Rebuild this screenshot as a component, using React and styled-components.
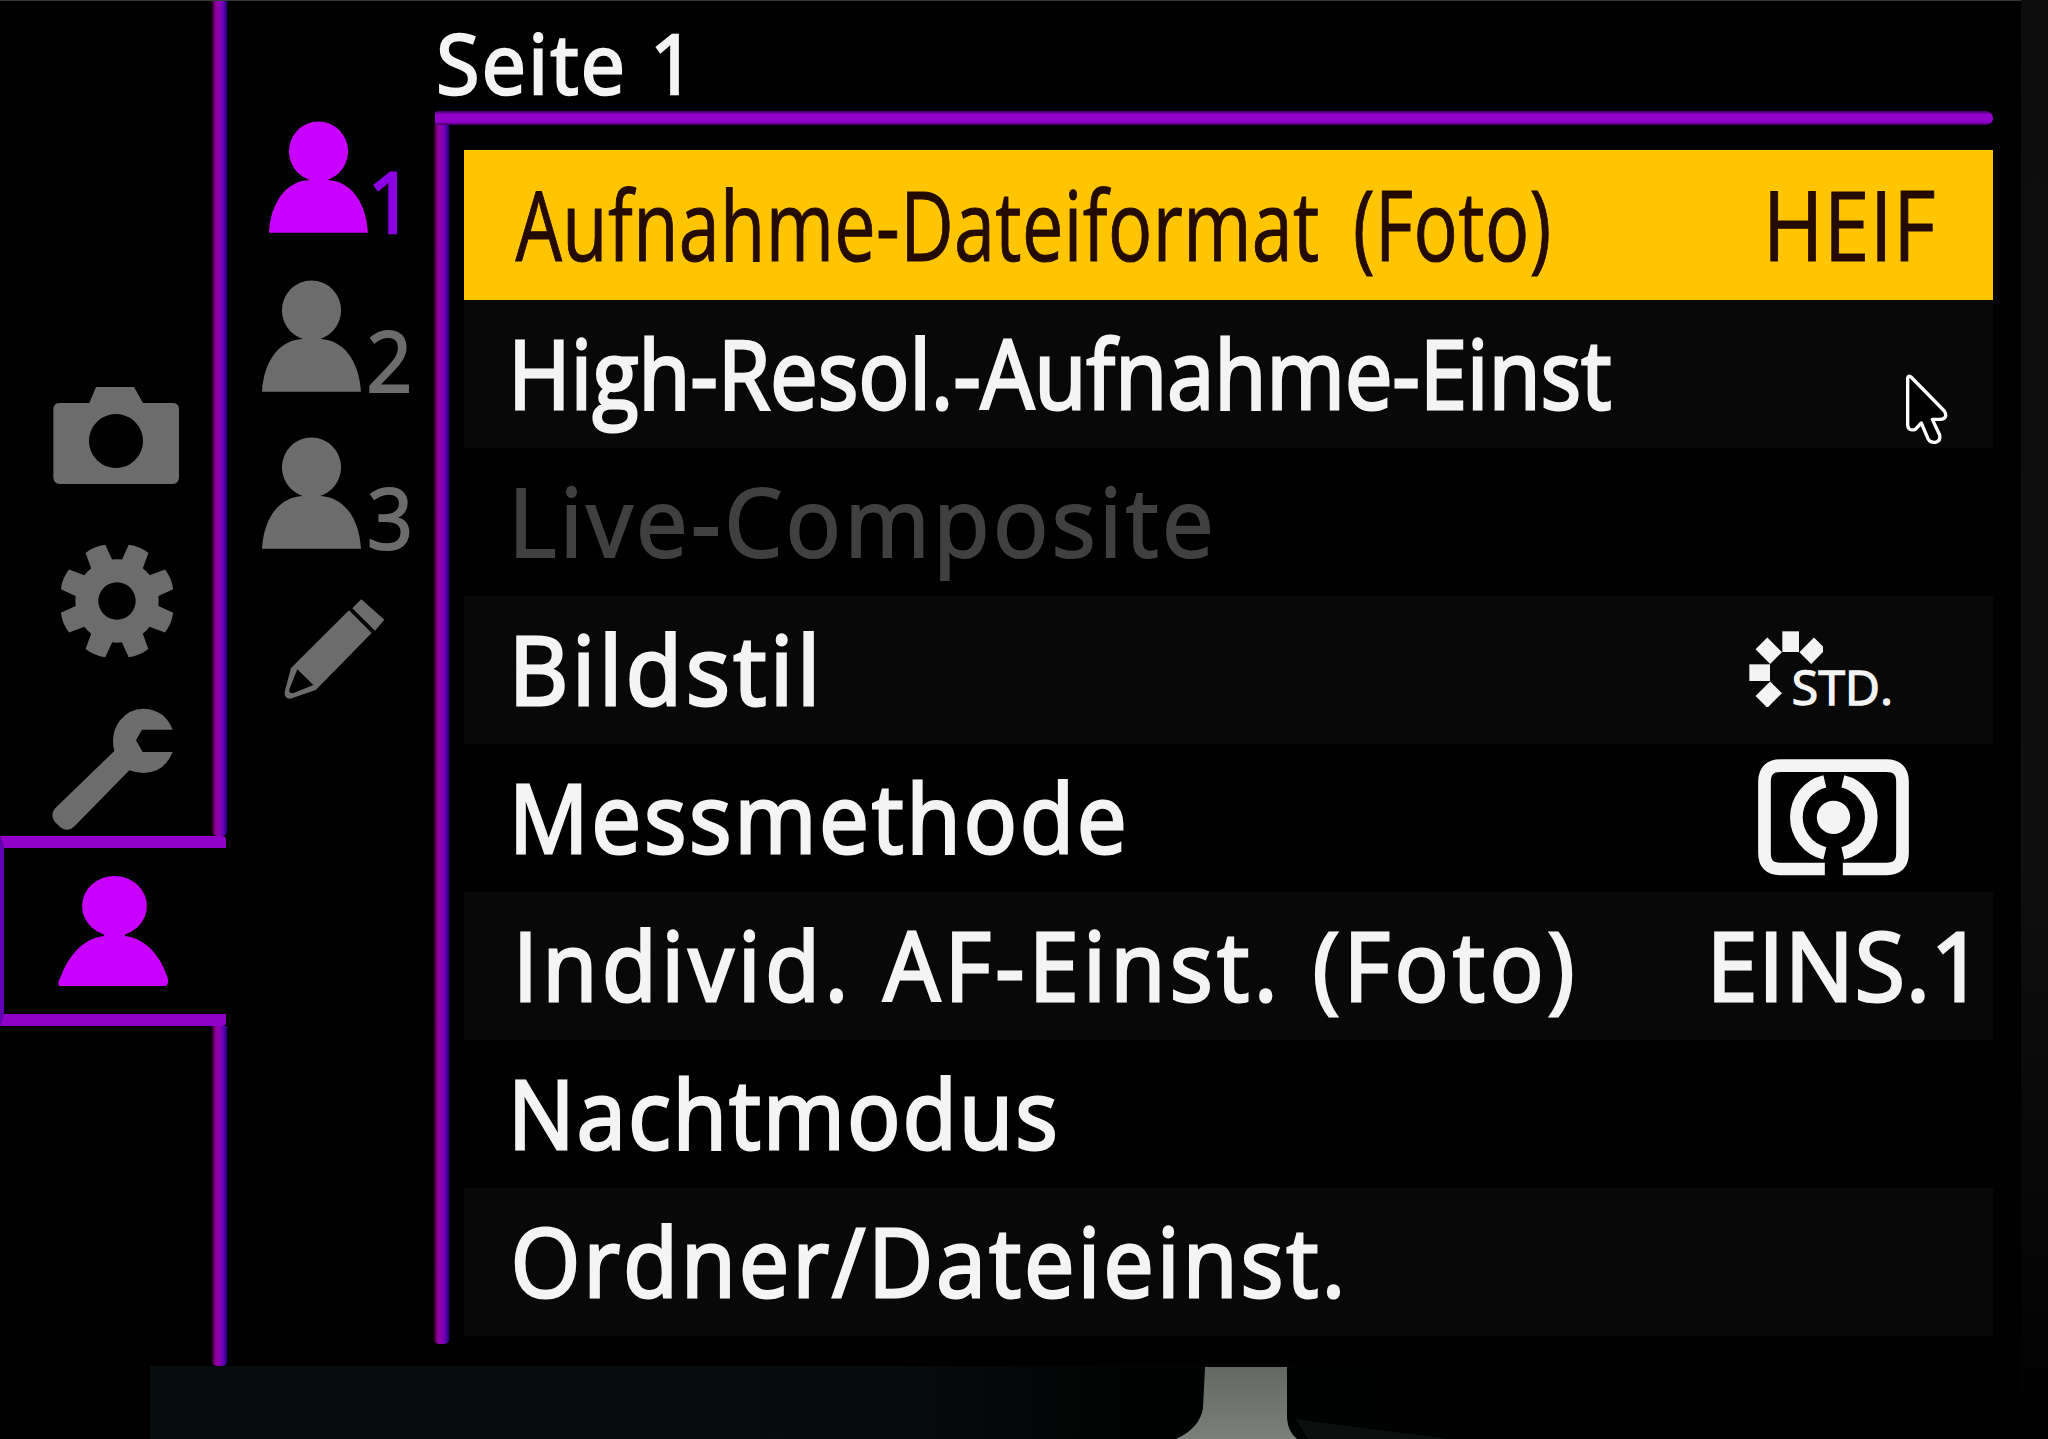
import React, { useLayoutEffect, useState } from 'react';
import styled, { createGlobalStyle } from 'styled-components'

const FONT = '"Open Sans", "Noto Sans", sans-serif'

const GlobalStyle = createGlobalStyle`
  * {
    box-sizing: border-box;
  }
  body {
    margin: 0;
    background: #000;
    font-family: ${FONT};
  }
  svg {
    display: block;
    flex: none;
  }
`

const Screen = styled.div`
  width: 2048px;
  height: 1439px;
  position: relative;
  overflow: hidden;
  background: #000;
  display: flex;
`

const Display = styled.div`
  width: 2021px;
  display: flex;
  flex-direction: column;
`

const Body = styled.div`
  height: 1366px;
  display: flex;
  border-top: 1px solid #343836;
`

const Bezel = styled.div`
  width: 27px;
  background: linear-gradient(#0d0d0d, #0f0f0f 60%, #050505 88%, #000);
`

const Line = styled.div`
  flex: none;
  width: 17px;
  height: ${props => props.$height ? props.$height + 'px' : 'auto'};
  background: linear-gradient(90deg, #000, #4a0040 12%, #8f009c 28%, #8a00b0 52%, #6400b8 72%, #2c0080 90%, #000);
  border-radius: 0 0 6px 6px;
`

const TopLine = styled.div`
  width: 1558px;
  height: 14px;
  margin-left: 2px;
  background: linear-gradient(#3a0058, #9200cc 25%, #9200cc 78%, #3a0058);
  border-radius: 3px 7px 7px 0;
`

const MainTabs = styled.div`
  width: 228px;
  display: flex;
  flex-direction: column;
`

const TabSection = styled.div`
  height: ${props => props.$height}px;
  display: flex;
  justify-content: space-between;
`

const TabIcons = styled.div`
  padding: 385px 0 0 50px;
`

const TabIcon = styled.svg`
  width: 132px;
  height: ${props => props.$height}px;
  margin-bottom: ${props => props.$gap || 0}px;
  fill: #6c6c6c;
`

const ActiveTab = styled.div`
  width: 226px;
  height: 190px;
  padding: 28px 0 0 53px;
  border: solid #9000c8;
  border-width: 12px 0 12px 4px;
  border-left-color: #6400b4;
  border-radius: 0 4px 4px 0;
`

const Pages = styled.div`
  width: 205px;
  padding-top: 120px;
  display: flex;
  flex-direction: column;
`

const Page = styled.div`
  height: 112px;
  margin: 0 0 ${props => props.$gap}px ${props => props.$active ? 41 : 34}px;
  display: flex;
  align-items: baseline;
  gap: ${props => props.$active ? 5 : 8}px;
  font-size: 84px;
  line-height: 84px;
  color: ${props => props.$active ? '#8c00e4' : '#6c6c6c'};

  svg {
    fill: ${props => props.$active ? '#c800ff' : '#6c6c6c'};
  }
`

const PencilBox = styled.div`
  padding-left: 55px;
`

const Menu = styled.div`
  flex: 1;
`

const Title = styled.div`
  height: 110px;
  padding: 6px 0 0 6px;
  line-height: 111px;
  color: #f4f4f4;
`

const Frame = styled.div`
  display: flex;
`

const Rows = styled.div`
  width: 1529px;
  margin: 25px 0 0 14px;
`

const rowColor = { normal: '#f4f4f4', selected: '#250a00', disabled: '#404040' }

const Row = styled.div`
  height: ${props => props.$kind === 'selected' ? 150 : 148}px;
  padding: 0 ${props => props.$end}px 5px ${props => props.$start}px;
  display: flex;
  align-items: center;
  justify-content: space-between;
  line-height: 138px;
  color: ${props => rowColor[props.$kind]};
  background: ${props => props.$kind === 'selected' ? '#ffc600' : props.$shaded ? '#080808' : '#000'};

  svg {
    position: relative;
    top: ${props => props.$drop || 0}px;
  }
`

const Label = styled.span`
  display: block;
  flex: none;
  width: ${props => props.$width}px;
  white-space: pre;
  transform-origin: 0 50%;
  font-size: ${props => props.$size}px;
  -webkit-text-stroke: ${props => props.$stroke}px currentColor;
`

const Backdrop = styled.div`
  height: 73px;
  margin-left: 150px;
  background: linear-gradient(90deg, #070c0c, #060b0b 40%, #010303 52%, #010202 60%, #000);
`

const Pointer = styled.svg`
  position: absolute;
  left: 1905px;
  top: 373px;
  width: 44px;
  height: 73px;
`

const Quality = styled.div`
  display: flex;
  align-items: flex-end;
  line-height: 49px;

  span {
    margin-left: -30px;
    position: relative;
    top: 5px;
  }
`

// Letter-spaces a label so its ink, outline included, fills exactly `width`
const Fit = ({ text, width, size = 95, squeeze = 0.92, stroke = 3, words = 0 }) => {
  const [fit, setFit] = useState({ spacing: 0, shift: 0 })

  useLayoutEffect(() => {
    const ctx = document.createElement('canvas').getContext('2d')
    ctx.font = `${size}px ${FONT}`
    const m = ctx.measureText(text)
    const ink = m.actualBoundingBoxLeft + m.actualBoundingBoxRight + stroke + words * (text.split(' ').length - 1)
    setFit({
      spacing: text.length > 1 ? (width / squeeze - ink) / (text.length - 1) : 0,
      shift: (m.actualBoundingBoxLeft + stroke / 2) * squeeze
    })
  }, [text, width, size, squeeze, stroke, words])

  return (
    <Label
      $width={width}
      $size={size}
      $stroke={stroke}
      style={{
        letterSpacing: fit.spacing,
        wordSpacing: words,
        transform: `translateX(${fit.shift}px) scaleX(${squeeze})`
      }}
    >{text}</Label>
  )
}

const Person = () => (
  <svg width="99" height="112" viewBox="784 290 298 336">
    <ellipse cx="933" cy="381" rx="89" ry="90" />
    <path d="M784 626C790 525 842 470 905 467V455H961V467C1024 470 1076 525 1082 626Z" />
  </svg>
)

const Pencil = () => (
  <svg width="102" height="102" viewBox="850 775 306 306" fill="#6c6c6c">
    <path d="M1085 779L1154 840L1126 873L1058 806Z" />
    <path fillRule="evenodd" d="M1048 812L1116 880L948 1051L872 1077Q853 1076 855 1056L874 985ZM893 989L869 1049Q867 1063 882 1060L941 1036Z" />
  </svg>
)

const Gear = () => (
  <TabIcon $height={116} $gap={48} viewBox="150 608 396 348">
    {[0, 45, 90, 135, 180, 225, 270, 315].map(a => (
      <path key={a} transform={`rotate(${a + 22.5} 351 782)`} d="M316 690L319 613Q351 604 383 613L386 690Z" />
    ))}
    <path fillRule="evenodd" d="M351 657a125 125 0 1 0 .1 0ZM351 726a56 56 0 1 1-.1 0Z" />
  </TabIcon>
)

const PictureStyle = () => (
  <Quality>
    <svg width="74" height="76" viewBox="206 152 222 228" fill="#f4f4f4">
      {[-135, -90, -45, 0, 45].map(a => (
        <rect key={a} x="306" y="153" width="50" height="62" transform={`rotate(${a} 331 277)`} />
      ))}
    </svg>
    <Fit text="STD." width={98} size={48} squeeze={1} stroke={1.5} />
  </Quality>
)

const Metering = () => (
  <svg width="151" height="117" viewBox="233 537 452 351" fill="none" stroke="#f4f4f4" strokeWidth="38">
    <path d="M433 867H300Q252 867 252 820V605Q252 557 300 557H618Q666 557 666 605V820Q666 867 618 867H487" />
    <path d="M433 604A111 111 0 0 0 433 820" />
    <path d="M487 604A111 111 0 0 1 487 820" />
    <circle cx="459" cy="712" r="50" fill="#f4f4f4" stroke="none" />
  </svg>
)

const items = [
  { text: 'Aufnahme-Dateiformat (Foto)', width: 1034, size: 97, squeeze: 0.76, stroke: 1, words: 18, kind: 'selected', end: 58,
    value: <Fit text="HEIF" width={165} size={97} squeeze={0.85} stroke={1} /> },
  { text: 'High-Resol.-Aufnahme-Einst', width: 1096, squeeze: 0.89, shaded: true, start: 51 },
  { text: 'Live-Composite', width: 694, size: 96, squeeze: 0.96, stroke: 2, kind: 'disabled', start: 52 },
  { text: 'Bildstil', width: 298, squeeze: 0.97, shaded: true, start: 52, end: 102, drop: 1, value: <PictureStyle /> },
  { text: 'Messmethode', width: 608, squeeze: 0.93, start: 52, end: 84, drop: 2, value: <Metering /> },
  { text: 'Individ. AF-Einst. (Foto)', width: 1053, squeeze: 0.94, words: 3, shaded: true, start: 56, end: 28,
    value: <Fit text="EINS.1" width={251} squeeze={0.96} /> },
  { text: 'Nachtmodus', width: 540, squeeze: 0.93, start: 51 },
  { text: 'Ordner/Dateieinst.', width: 826, squeeze: 0.94, shaded: true, start: 50 }
]

const App = () => (
  <Screen>
    <GlobalStyle />
    <Display>
      <Body>
        <MainTabs>
          <TabSection $height={835}>
            <TabIcons>
              <TabIcon $height={99} $gap={58} viewBox="150 138 396 297">
                <path fillRule="evenodd" d="M288 141H402L429 189H520Q537 190 537 207V413Q536 431 518 432H180Q161 431 160 413V207Q161 189 178 189H268ZM348 222a81 81 0 1 1-.1 0Z" />
              </TabIcon>
              <Gear />
              <TabIcon $height={125} viewBox="150 1100 396 375">
                <path d="M518 1168H426L408 1200L428 1235H518Q492 1298 430 1298Q408 1298 388 1290L222 1459Q203 1477 181 1461L164 1444Q150 1424 164 1405L343 1232Q330 1180 360 1140Q390 1104 432 1105Q495 1108 518 1168Z" />
              </TabIcon>
            </TabIcons>
            <Line />
          </TabSection>
          <ActiveTab>
            <svg width="113" height="111" viewBox="56 875 115 113" fill="#c800ff">
              <ellipse cx="114.500" cy="905.500" rx="33" ry="30.500" />
              <path d="M58 987Q56 984 60 977C69 953 85 938 104 936V932H125V936C144 938 160 953 168 977Q171 984 167 987Z" />
            </svg>
          </ActiveTab>
          <TabSection $height={340}>
            <div />
            <Line />
          </TabSection>
        </MainTabs>
        <Pages>
          <Page $active $gap={47}><Person /><Fit text="1" width={26} size={85} squeeze={0.95} stroke={2.5} /></Page>
          <Page $gap={45}><Person /><Fit text="2" width={40} size={85} squeeze={0.95} stroke={2} /></Page>
          <Page $gap={49}><Person /><Fit text="3" width={40} size={85} squeeze={0.95} stroke={2} /></Page>
          <PencilBox><Pencil /></PencilBox>
        </Pages>
        <Menu>
          <Title><Fit text="Seite 1" width={240} size={82} squeeze={0.96} stroke={2.5} /></Title>
          <TopLine />
          <Frame>
            <Line $height={1219} />
            <Rows>
              {items.map(item => (
                <Row
                  key={item.text}
                  $kind={item.kind || 'normal'}
                  $shaded={item.shaded}
                  $start={item.start || 51}
                  $end={item.end || 0}
                  $drop={item.drop}
                >
                  <Fit
                    text={item.text}
                    width={item.width}
                    size={item.size}
                    squeeze={item.squeeze}
                    stroke={item.stroke}
                    words={item.words}
                  />
                  {item.value}
                </Row>
              ))}
            </Rows>
          </Frame>
        </Menu>
      </Body>
      <Backdrop>
        <svg width="1871" height="73" viewBox="150 1366 1871 73">
          <defs>
            <linearGradient id="gap" x2="0" y2="1">
              <stop offset="0" stopColor="#656762" />
              <stop offset="1" stopColor="#7b807b" />
            </linearGradient>
          </defs>
          <path fill="url(#gap)" d="M1205 1367H1287V1418Q1288 1432 1297 1439H1176Q1200 1428 1203 1408Z" />
          <path fill="#0b100f" d="M1296 1419L1370 1429L1450 1439H1308Z" />
        </svg>
      </Backdrop>
    </Display>
    <Bezel />
    <Pointer viewBox="795 817 132 219">
      <path fill="#000" stroke="#fff" strokeWidth="10" strokeLinejoin="round" d="M803 832Q804 823 813 829L913 931Q925 952 903 956H877L899 1003Q903 1021 886 1025Q871 1027 864 1014L844 967L826 986Q805 993 803 973Z" />
    </Pointer>
  </Screen>
)

export default App
